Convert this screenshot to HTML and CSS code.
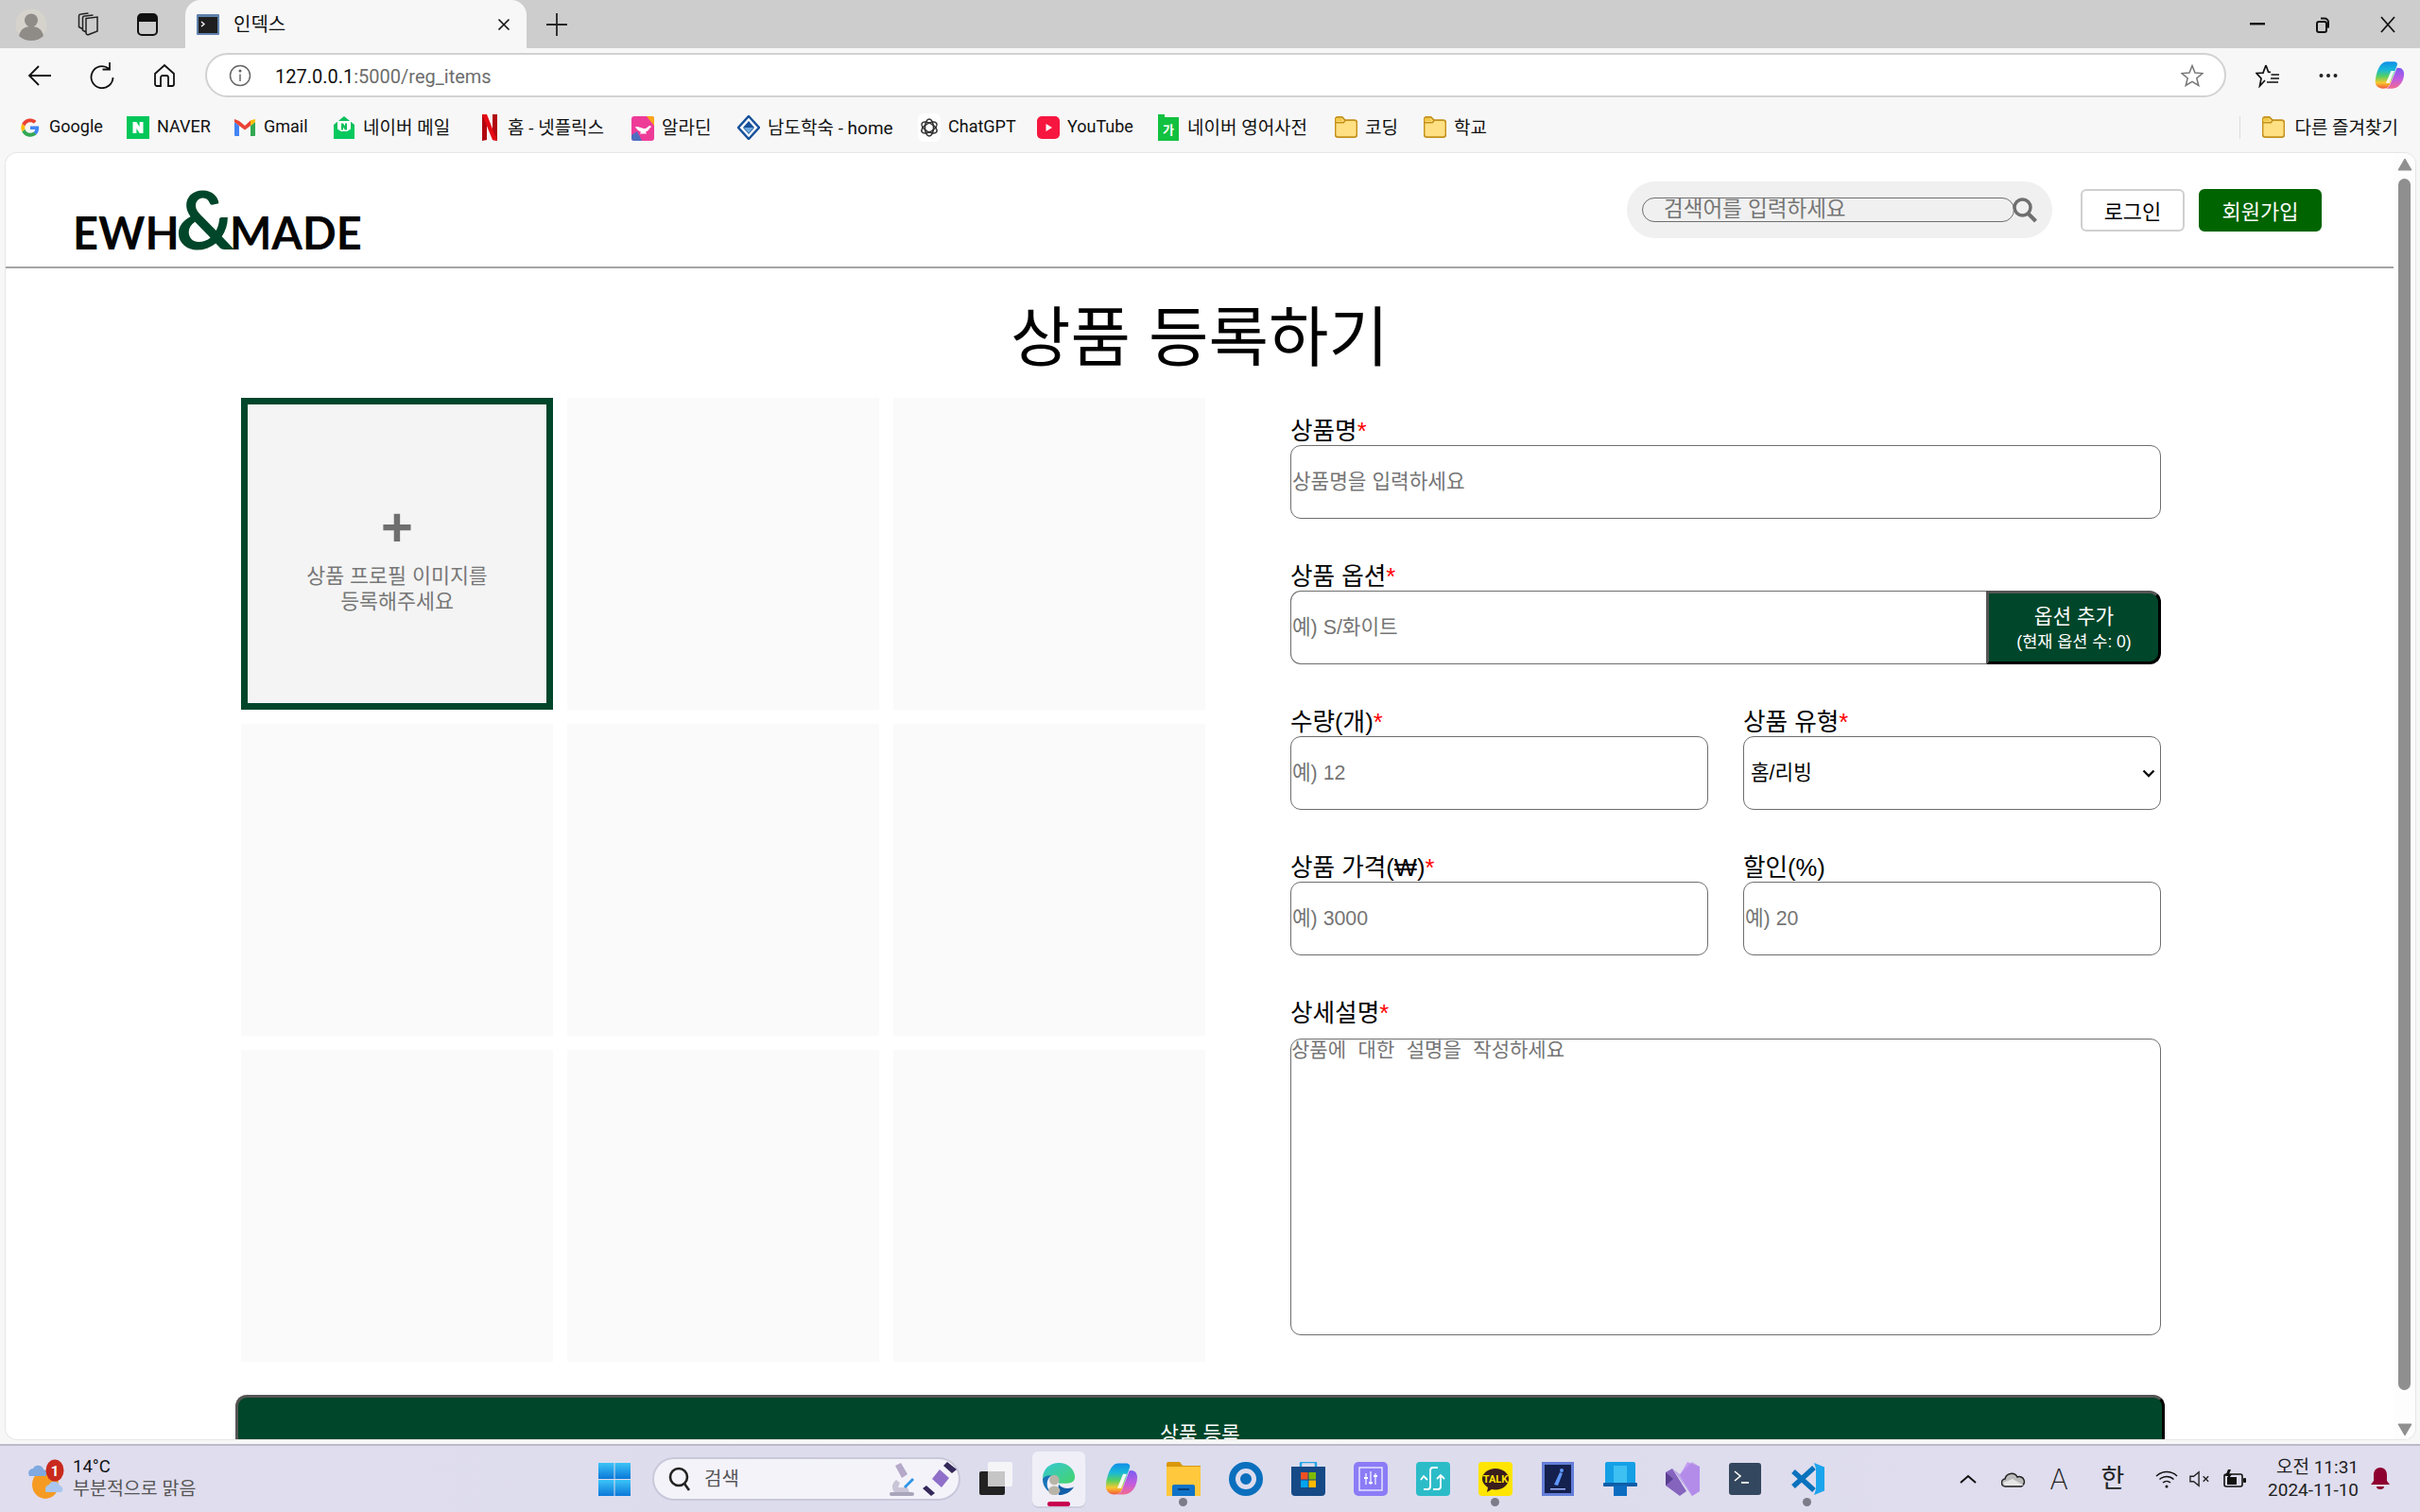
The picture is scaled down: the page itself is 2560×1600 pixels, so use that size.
FILE: index.html
```html
<!DOCTYPE html>
<html lang="ko">
<head>
<meta charset="utf-8">
<title>인덱스</title>
<link rel="stylesheet" href="styles.css">
</head>
<body>
<svg class="defs" width="0" height="0">
  <defs>
    <symbol id="folder" viewBox="1 2 22 21.500"><path d="M1.5 5a2.5 2.5 0 0 1 2.5-2.5h4l3 3h9a2.5 2.5 0 0 1 2.5 2.5v11.500a2.500 2.500 0 0 1-2.500 2.500h-16a2.500 2.500 0 0 1-2.500-2.500z" fill="#ffe083" stroke="#c4911c" stroke-width="1.600"/><path d="M1.500 8h8l2-2.500" fill="none" stroke="#c4911c" stroke-width="1.400"/><path d="M2 3.500h5l2 3h-7z" fill="#f2c744"/></symbol>
    <linearGradient id="cop" x1="0" y1="0" x2="0" y2="1"><stop offset="0" stop-color="#0f8fe8"/><stop offset=".3" stop-color="#19b8d8"/><stop offset=".55" stop-color="#58d060"/><stop offset=".78" stop-color="#f7c92f"/><stop offset="1" stop-color="#f4573a"/></linearGradient>
    <linearGradient id="cop2" x1="0" y1="0" x2="0" y2="1"><stop offset="0" stop-color="#7a5cf0"/><stop offset=".55" stop-color="#c25ce0"/><stop offset="1" stop-color="#f46a8e"/></linearGradient>
    <symbol id="copilot" viewBox="0 0 36 48"><path d="M15 2h8c3 0 5 2 4 6L19 38c-1 4-3 8-8 8-6 0-10-6-9-14C3 20 7 2 15 2z" fill="url(#cop)"/><path d="M28 12c5 0 7 4 7 10 0 12-6 24-14 24h-9c4 0 6-3 7-7l7-24c.5-2 1-3 2-3z" fill="url(#cop2)"/><path d="M20 17h4l-6 20h-4z" fill="#fff" opacity=".9"/></symbol>
    <linearGradient id="edge" x1="0" y1="0" x2="1" y2="1"><stop offset="0" stop-color="#36c7d6"/><stop offset="1" stop-color="#45d46a"/></linearGradient>
    <linearGradient id="win" x1="0" y1="0" x2="0" y2="1"><stop offset="0" stop-color="#3cc4f8"/><stop offset="1" stop-color="#0a78d8"/></linearGradient>
  </defs>
</svg>

<div class="window">
  <div class="tabstrip">
    <div class="strip-slot profile-slot"><svg width="34" height="34" viewBox="0 0 34 34"><circle cx="17" cy="17" r="16.500" fill="#d6d3cd"/><circle cx="17" cy="12.500" r="7" fill="#8f8b86"/><path d="M4 29c2-8 7-10 13-10s11 2 13 10c-3 3-8 5-13 5s-10-2-13-5z" fill="#8f8b86"/></svg></div>
    <div class="strip-slot work-slot"><svg width="26" height="26" viewBox="0 0 26 26" fill="none" stroke="#222" stroke-width="1.500"><path d="M11 6.500l12-1.500v15l-9 3.500a2 2 0 0 1-3-2z"/><path d="M11 21L7.500 19V6a2 2 0 0 1 2-2l9-1M7 17.500L3.500 15.500V4a2 2 0 0 1 2-2l8-1"/></svg></div>
    <div class="strip-slot actions-slot"><svg width="24" height="26" viewBox="0 0 24 26"><rect x="2" y="2" width="20" height="22" rx="4" fill="none" stroke="#111" stroke-width="2"/><path d="M2 6a4 4 0 0 1 4-4h12a4 4 0 0 1 4 4v4H2z" fill="#111"/></svg></div>
    <div class="tab">
      <svg width="24" height="22" viewBox="0 0 24 22"><rect width="24" height="22" rx="1" fill="#5f80ad"/><rect x="2" y="3" width="20" height="17" fill="#1f1f1f"/><path d="M5 8l3 2.500-3 2.500" stroke="#fff" stroke-width="1.300" fill="none"/></svg>
      <span class="tab-title">인덱스</span>
      <svg class="tab-close" width="14" height="14" viewBox="0 0 14 14" stroke="#111" stroke-width="1.600"><path d="M1.500 1.500l11 11M12.500 1.500l-11 11"/></svg>
    </div>
    <div class="strip-slot plus-slot"><svg width="22" height="26" viewBox="0 0 22 26" stroke="#222" stroke-width="1.800"><path d="M11 1v24M0 13h22"/></svg></div>
    <div class="winctl">
      <div class="winbtn"><svg width="16" height="4" viewBox="0 0 16 4"><rect width="16" height="2.400" fill="#111"/></svg></div>
      <div class="winbtn"><svg width="16" height="18" viewBox="0 0 16 18" fill="none" stroke="#111" stroke-width="2"><rect x="2" y="6" width="10" height="11" rx="2"/><path d="M6 2.500h4a4 4 0 0 1 4 4v6"/></svg></div>
      <div class="winbtn"><svg width="18" height="18" viewBox="0 0 18 18" stroke="#111" stroke-width="1.800"><path d="M2 1l14 16M16 1L2 17"/></svg></div>
    </div>
  </div>

  <div class="toolbar">
    <div class="tool-slot"><svg width="26" height="26" viewBox="0 0 26 26" fill="none" stroke="#111" stroke-width="1.800"><path d="M25 13H2M12 3L2 13l10 10"/></svg></div>
    <div class="tool-slot"><svg width="26" height="28" viewBox="0 0 26 28" fill="none" stroke="#111" stroke-width="1.800"><path d="M20 6.500A11.500 11.500 0 1 0 24.500 16M21 0v7.500h-7.500"/></svg></div>
    <div class="tool-slot"><svg width="24" height="26" viewBox="0 0 24 26" fill="none" stroke="#111" stroke-width="1.800"><path d="M2 11l10-9 10 9v11a2 2 0 0 1-2 2h-4v-9a2 2 0 0 0-2-2h-4a2 2 0 0 0-2 2v9H4a2 2 0 0 1-2-2z"/></svg></div>
    <div class="address">
      <svg width="24" height="24" viewBox="0 0 24 24" fill="none" stroke="#666" stroke-width="1.500"><circle cx="12" cy="12" r="10.500"/><path d="M12 10.500V18"/><circle cx="12" cy="7" r=".8" fill="#666"/></svg>
      <span class="url"><span class="url-host">127.0.0.1</span>:5000/reg_items</span>
      <svg class="addr-star" width="24" height="24" viewBox="0 0 24 24" fill="none" stroke="#777" stroke-width="1.500"><path d="M12 1.500l3 7.500 8 .6-6.200 5.100 2 7.800L12 18.300l-6.800 4.200 2-7.800L1 9.600 9 9z"/></svg>
    </div>
    <div class="tool-right">
      <div class="tool-slot-r"><svg width="26" height="26" viewBox="0 0 26 26" fill="none" stroke="#111" stroke-width="1.700"><path d="M11 2l2.600 7.200 2.400.1M10 18l-5.500 6 1.500-8-5-5.500 7-.4L11 2M16.500 12H25M16 16h9M12 20h12"/></svg></div>
      <div class="tool-slot-r"><svg width="20" height="6" viewBox="0 0 20 6" fill="#222"><circle cx="2.500" cy="3" r="2"/><circle cx="10" cy="3" r="2"/><circle cx="17.500" cy="3" r="2"/></svg></div>
      <div class="tool-slot-r"><svg width="33" height="31" viewBox="0 0 36 48" preserveAspectRatio="none"><use href="#copilot"/></svg></div>
    </div>
  </div>

  <div class="bookmarks">
    <div class="bm bm-latin bm-google"><svg width="22" height="22" viewBox="0 0 24 24"><path d="M22 12.300c0-.8-.1-1.400-.2-2H12v3.900h5.700c-.3 1.400-1 2.500-2.200 3.300l3.400 2.700c2-1.900 3.100-4.700 3.100-7.900z" fill="#4285f4"/><path d="M12 22.500c2.900 0 5.300-1 7-2.600l-3.400-2.600c-.9.600-2.100 1-3.600 1-2.800 0-5.200-1.900-6-4.500l-3.500 2.700c1.700 3.600 5.300 6 9.500 6z" fill="#34a853"/><path d="M6 13.700c-.4-1.200-.4-2.500 0-3.500L2.500 7.500c-1.400 2.800-1.400 6.100 0 8.900z" fill="#fbbc05"/><path d="M12 5.700c1.600 0 3 .6 4.100 1.600l3-3C17.300 2.600 14.900 1.500 12 1.500 7.800 1.500 4.200 3.900 2.500 7.500L6 10.200c.8-2.600 3.200-4.500 6-4.500z" fill="#ea4335"/></svg><span>Google</span></div>
    <div class="bm bm-latin bm-naver"><svg width="24" height="24" viewBox="0 0 24 24"><rect width="24" height="24" fill="#03c75a"/><path d="M6.500 6h3.800l3.300 5V6h3.900v12h-3.800l-3.300-5v5H6.500z" fill="#fff"/></svg><span>NAVER</span></div>
    <div class="bm bm-latin bm-gmail"><svg width="24" height="20" viewBox="0 0 24 20"><path d="M1 19V4l5 4v11H2a1 1 0 0 1-1-1z" fill="#4285f4"/><path d="M18 19V8l5-4v14a1 1 0 0 1-1 1z" fill="#34a853"/><path d="M18 2.500l5-1.500v3l-5 4-1-2z" fill="#fbbc05"/><path d="M1 4V1l5 2 6 5 6-5.500V8l-6 4.500L6 8z" fill="#ea4335"/></svg><span>Gmail</span></div>
    <div class="bm bm-nmail"><svg width="24" height="26" viewBox="0 0 24 26"><path d="M1 10L12 1l11 9v14a1 1 0 0 1-1 1H2a1 1 0 0 1-1-1z" fill="#0bbf5c"/><rect x="5" y="6" width="14" height="11" fill="#fff"/><path d="M9 8.500h2l2 3v-3h2v7h-2l-2-3v3H9z" fill="#0bbf5c"/><path d="M1 12l11 7 11-7v13H1z" fill="#06c95e"/></svg><span>네이버 메일</span></div>
    <div class="bm bm-netflix"><svg width="20" height="30" viewBox="3 0 18 30"><path d="M4 1h5v27l-5 1z" fill="#b1060f"/><path d="M15 1h5v28l-5-1z" fill="#b1060f"/><path d="M4 1h5l11 28-5-1z" fill="#e50914"/></svg><span>홈 - 넷플릭스</span></div>
    <div class="bm bm-aladin"><svg width="24" height="28" viewBox="0 0 24 28"><rect y="2" width="24" height="26" rx="3" fill="#ee3b98"/><path d="M16 2h6a2 2 0 0 1 2 2v8z" fill="#f9a61a"/><path d="M0 22l6-4 5 10H3a3 3 0 0 1-3-3z" fill="#4c6fc0"/><path d="M4 13c5 0 7 2 10 2 2 0 3-2 5-3 1 0 2 .5 2 1.500-2 0-2 4-6 5l1 2H9l1-2c-3-1-5-3-6-5.500z" fill="#fff"/></svg><span>알라딘</span></div>
    <div class="bm bm-namdo"><svg width="24" height="26" viewBox="0 0 24 26"><path d="M12 1l11 12-11 12L1 13z" fill="#fff" stroke="#17519b" stroke-width="2.500"/><path d="M12 6l6 7-6 7-6-7z" fill="#17519b"/><path d="M7 13h10l-5 6z" fill="#6fa9dd"/></svg><span>남도학숙 - home</span></div>
    <div class="bm bm-latin bm-chatgpt"><svg width="24" height="30" viewBox="0 0 24 30"><rect width="24" height="30" rx="6" fill="#fff"/><g fill="none" stroke="#333" stroke-width="1.500"><ellipse cx="12" cy="15" rx="4.500" ry="9"/><ellipse cx="12" cy="15" rx="4.500" ry="9" transform="rotate(60 12 15)"/><ellipse cx="12" cy="15" rx="4.500" ry="9" transform="rotate(120 12 15)"/></g></svg><span>ChatGPT</span></div>
    <div class="bm bm-latin bm-youtube"><svg width="24" height="24" viewBox="0 0 24 24"><rect width="24" height="24" rx="5" fill="#f7163f"/><path d="M9.500 8l6.500 4-6.500 4z" fill="#fff"/></svg><span>YouTube</span></div>
    <div class="bm bm-dict"><svg width="22" height="28" viewBox="0 0 22 28"><path d="M0 0h7v3h15v25H0z" fill="#12c13f"/><text x="11" y="21" class="dict-mark" text-anchor="middle">가</text></svg><span>네이버 영어사전</span></div>
    <div class="bm bm-code"><svg width="24" height="24"><use href="#folder"/></svg><span>코딩</span></div>
    <div class="bm bm-school"><svg width="24" height="24"><use href="#folder"/></svg><span>학교</span></div>
    <div class="bm-other">
      <svg width="24" height="24"><use href="#folder"/></svg><span>다른 즐겨찾기</span>
    </div>
  </div>

  <div class="frame">
    <div class="viewport">
      <div class="page">
        <header class="site-header">
          <div class="logo"><span>EWH</span><span class="logo-amp">&amp;</span><span>MADE</span></div>
          <div class="header-right">
            <div class="search">
              <input class="search-input" type="text" placeholder="검색어를 입력하세요">
              <svg class="search-icon" width="28" height="28" viewBox="0 0 28 28" fill="none" stroke="#6f6f6f"><circle cx="11.500" cy="11.500" r="8.500" stroke-width="3.500"/><path d="M17.500 18l8 8" stroke-width="4"/></svg>
            </div>
            <button class="btn-login" type="button">로그인</button>
            <button class="btn-signup" type="button">회원가입</button>
          </div>
        </header>
        <h1 class="page-title">상품 등록하기</h1>
        <form class="reg">
          <div class="reg-top">
            <div class="photos">
              <div class="photo photo-main">
                <span class="photo-plus">+</span>
                <span class="photo-text">상품 프로필 이미지를<br>등록해주세요</span>
              </div>
              <div class="photo"></div><div class="photo"></div>
              <div class="photo"></div><div class="photo"></div><div class="photo"></div>
              <div class="photo"></div><div class="photo"></div><div class="photo"></div>
            </div>
            <div class="fields">
              <div class="field">
                <label class="lbl">상품명<span class="req">*</span></label>
                <input class="inp" type="text" placeholder="상품명을 입력하세요">
              </div>
              <div class="field">
                <label class="lbl">상품 옵션<span class="req">*</span></label>
                <div class="option-row">
                  <input class="inp inp-option" type="text" placeholder="예) S/화이트">
                  <button class="btn-option" type="button"><span class="opt-main">옵션 추가</span><span class="opt-sub">(현재 옵션 수: 0)</span></button>
                </div>
              </div>
              <div class="field-row">
                <div class="field">
                  <label class="lbl">수량(개)<span class="req">*</span></label>
                  <input class="inp" type="text" placeholder="예) 12">
                </div>
                <div class="field">
                  <label class="lbl">상품 유형<span class="req">*</span></label>
                  <div class="sel-wrap">
                    <select class="inp sel"><option>홈/리빙</option></select>
                    <svg class="sel-arrow" width="14" height="9" viewBox="0 0 14 9" fill="none" stroke="#111" stroke-width="2.400"><path d="M1.500 1.500L7 7l5.500-5.500"/></svg>
                  </div>
                </div>
              </div>
              <div class="field-row">
                <div class="field">
                  <label class="lbl">상품 가격(₩)<span class="req">*</span></label>
                  <input class="inp" type="text" placeholder="예) 3000">
                </div>
                <div class="field">
                  <label class="lbl">할인(%)</label>
                  <input class="inp" type="text" placeholder="예) 20">
                </div>
              </div>
              <div class="field field-desc">
                <label class="lbl lbl-desc">상세설명<span class="req">*</span></label>
                <textarea class="desc" placeholder="상품에 대한 설명을 작성하세요"></textarea>
              </div>
            </div>
          </div>
          <button class="btn-submit" type="button">상품 등록</button>
        </form>
      </div>
      <div class="scrollbar">
        <svg width="16" height="14" viewBox="0 0 16 14"><path d="M8 1l7 12H1z" fill="#8f8f8f" stroke="#8f8f8f" stroke-linejoin="round"/></svg>
        <div class="thumb"></div>
        <svg width="16" height="14" viewBox="0 0 16 14"><path d="M8 13L1 1h14z" fill="#8f8f8f" stroke="#8f8f8f" stroke-linejoin="round"/></svg>
      </div>
    </div>
  </div>

  <div class="taskbar">
    <div class="tb-weather">
      <svg width="40" height="42" viewBox="0 0 40 42"><ellipse cx="19" cy="27" rx="14" ry="15" fill="#f59b23"/><path d="M2 18a5 5 0 0 1 4-8 6 6 0 0 1 11 1 4 4 0 0 1 2 7z" fill="#7fa9e0"/><path d="M20 35a5 5 0 0 1 3-8 6 6 0 0 1 11 1 4 4 0 0 1 2 7z" fill="#a8c6ef"/><ellipse cx="29" cy="12" rx="9.500" ry="11.500" fill="#c92a1e"/><text x="29" y="18" class="badge-num" text-anchor="middle">1</text></svg>
      <div class="w-text"><span class="w-temp">14°C</span><span class="w-desc">부분적으로 맑음</span></div>
    </div>
    <div class="tb-start"><svg width="34" height="35" viewBox="0 0 34 35"><rect width="16.500" height="17" fill="url(#win)"/><rect x="17.500" width="16.500" height="17" fill="url(#win)"/><rect y="18" width="16.500" height="17" fill="url(#win)"/><rect x="17.500" y="18" width="16.500" height="17" fill="url(#win)"/></svg></div>
    <div class="tb-search">
      <svg width="26" height="28" viewBox="0 0 26 28" fill="none" stroke="#222" stroke-width="2.600"><circle cx="12" cy="12" r="9"/><path d="M18 19l5 7"/></svg>
      <span class="tb-search-text">검색</span>
      <svg class="tb-search-art" width="76" height="38" viewBox="0 0 76 38"><path d="M8 33c-3-4-3-9 2-13l4 3-2 5h10l2 5z" fill="#c9c5d6"/><path d="M9 5l6-3 7 12-6 4z" fill="#b4a9c8"/><path d="M18 27l9-9 2 2-9 9z" fill="#2e95e6"/><rect x="3" y="33" width="26" height="4" rx="2" fill="#a9a5bb"/><path d="M48 19l8-10 10 9-8 10z" fill="#8f6fc9"/><path d="M42 26l9 8-4 3-9-8z M60 5l9 8 5-4-10-8z" fill="#35285a"/></svg>
    </div>
    <div class="tb-apps">
      <div class="app"><svg width="38" height="36" viewBox="0 0 38 36"><rect x="10" y="0" width="26" height="26" rx="2" fill="#f5f5f8"/><rect x="1" y="10" width="27" height="25" rx="2" fill="#222"/><rect x="10" y="10" width="18" height="16" fill="#c6c6c6"/></svg></div>
      <div class="app app-active"><svg width="38" height="38" viewBox="0 0 38 38"><path d="M1 19C1 8 9 1 19 1c11 0 18 8 18 16 0 5-4 7-9 7h-9c1-5-2-8-7-8-5 0-9 1-11 3z" fill="url(#edge)"/><path d="M1 19c2-3 5-4 10-4-4 3-5 6-5 10 0 6 5 11 13 12C9 37 1 29 1 19z" fill="#1a72b8"/><path d="M19 37c7 0 13-3 17-9-4 2-13 3-17-3-1 5-1 9 0 12z" fill="#125ea8"/><circle cx="14" cy="20" r="5.500" fill="#b9b4a8"/><ellipse cx="14" cy="32" rx="6.500" ry="5" fill="#b9b4a8"/></svg><span class="app-bar"></span></div>
      <div class="app"><svg class="app-copilot" width="36" height="36" viewBox="0 0 36 48" preserveAspectRatio="none"><use href="#copilot"/></svg></div>
      <div class="app app-open"><svg width="36" height="36" viewBox="0 0 36 36"><path d="M0 2a2 2 0 0 1 2-2h12l3 4h19v32H0z" fill="#d9970c"/><rect y="5" width="36" height="31" fill="#ffc83d"/><path d="M6 26a2 2 0 0 1 2-2h20a2 2 0 0 1 2 2v10H6z" fill="#0f73c8"/><rect x="12" y="28" width="12" height="2" fill="#063f78"/></svg><span class="app-dot"></span></div>
      <div class="app"><svg width="36" height="36" viewBox="0 0 36 36" fill="none" stroke="#0a6fbd"><circle cx="18" cy="18" r="14.500" stroke-width="7"/><circle cx="18" cy="18" r="3" stroke-width="6"/></svg></div>
      <div class="app"><svg width="36" height="36" viewBox="0 0 36 36"><path d="M0 5h36v27a4 4 0 0 1-4 4H4a4 4 0 0 1-4-4z" fill="#164a86"/><path d="M10 5V2a2 2 0 0 1 2-2h12a2 2 0 0 1 2 2v3" fill="none" stroke="#27a4e6" stroke-width="2.500"/><rect x="10" y="11" width="7.500" height="7.500" fill="#f25022"/><rect x="18.500" y="11" width="7.500" height="7.500" fill="#7fba00"/><rect x="10" y="19.500" width="7.500" height="7.500" fill="#00a4ef"/><rect x="18.500" y="19.500" width="7.500" height="7.500" fill="#ffb900"/></svg></div>
      <div class="app"><svg width="36" height="36" viewBox="0 0 36 36"><rect width="36" height="36" rx="5" fill="#8b7cf6"/><rect x="6" y="6" width="24" height="24" fill="none" stroke="#e6e2ff" stroke-width="1.500"/><path d="M13 12v12M18 10v14M23 12v12" stroke="#f3f0ff" stroke-width="1.300"/><rect x="11" y="16" width="4" height="2" fill="#fff"/><rect x="16" y="21" width="4" height="2" fill="#fff"/><rect x="21" y="14" width="4" height="2" fill="#fff"/></svg></div>
      <div class="app"><svg width="36" height="36" viewBox="0 0 36 36"><rect width="36" height="36" rx="4" fill="#2cbcc8"/><path d="M23 6h-5a3 3 0 0 0-3 3v17a3 3 0 0 1-3 3H8M5 19l3-4 4 4M18 29h5a3 3 0 0 0 3-3V15M22 18l4-4 4 4" fill="none" stroke="#fff" stroke-width="1.800"/></svg></div>
      <div class="app app-open"><svg width="36" height="36" viewBox="0 0 36 36"><rect width="36" height="36" rx="4" fill="#ffe500"/><path d="M18 7c-8 0-14 5-14 11 0 4 3 7 6 9l-1 5 5-3c10 2 18-4 18-11 0-6-6-11-14-11z" fill="#3a1d1d"/><text x="18" y="22" class="talk-mark" text-anchor="middle">TALK</text></svg><span class="app-dot"></span></div>
      <div class="app"><svg width="34" height="36" viewBox="0 0 34 36"><rect width="34" height="36" fill="#3a5ed0" opacity=".75"/><rect x="3" y="3" width="28" height="30" fill="#14204e"/><path d="M13 24l6-13 3 1-5 13z" fill="#5f97ff"/><circle cx="21" cy="9" r="2" fill="#5f97ff"/><rect x="9" y="28" width="16" height="1.500" fill="#9fb4ff"/></svg></div>
      <div class="app"><svg width="36" height="36" viewBox="0 0 36 36"><rect x="2" y="0" width="32" height="25" rx="2" fill="#15a0e6"/><rect x="11" y="4" width="14" height="21" fill="#3ec0f2"/><rect x="0" y="22" width="36" height="4" rx="1" fill="#0c5ea8"/><rect x="11" y="25" width="14" height="11" fill="#0b6cc0"/></svg></div>
      <div class="app"><svg width="36" height="36" viewBox="0 0 36 36"><path d="M0 11l7-4 15 24-7 5-15-11z" fill="#7b57b8" opacity=".9"/><path d="M36 5v26l-8 5-13-22 8-14z" fill="#c39bf2"/><path d="M0 11v14l8-7z" fill="#5a3e91"/><path d="M7 7l21 29 8-5V5l-8-5-13 13z" fill="#a57fe3" opacity=".55"/></svg></div>
      <div class="app"><svg width="34" height="34" viewBox="0 0 34 34"><rect width="34" height="34" rx="3" fill="#33475e"/><path d="M6 9l6 5-6 5" fill="none" stroke="#fff" stroke-width="1.600"/><rect x="13" y="20" width="8" height="1.800" fill="#fff"/></svg></div>
      <div class="app app-open"><svg width="36" height="36" viewBox="0 0 36 36"><path d="M3 10l22 20M3 26L25 6" fill="none" stroke="#0a72bc" stroke-width="5.500"/><path d="M25 1l11 4.500v25L25 35l2-6V7z" fill="#1ca4ec"/></svg><span class="app-dot"></span></div>
    </div>
    <div class="tray">
      <div class="tray-i tray-w48"><svg width="18" height="10" viewBox="0 0 18 10" fill="none" stroke="#111" stroke-width="2"><path d="M1 9l8-7 8 7"/></svg></div>
      <div class="tray-i tray-w48"><svg width="26" height="18" viewBox="0 0 26 18"><path d="M5 17a4 4 0 0 1-1-8 7 7 0 0 1 13-2 5 5 0 0 1 4 10z" fill="#bbb" stroke="#222" stroke-width="1.500"/><path d="M2 13l10-4 12 7H4z" fill="#e6e6e6"/></svg></div>
      <div class="tray-i tray-w48 tray-a">A</div>
      <div class="tray-i tray-w66 tray-han">한</div>
      <div class="tray-i tray-w48"><svg width="24" height="20" viewBox="0 0 24 20" fill="none" stroke="#111" stroke-width="1.500"><path d="M1 7a16 16 0 0 1 22 0M4.500 10.500a11 11 0 0 1 15 0M8 14a6 6 0 0 1 8 0"/><circle cx="12" cy="18" r="1.500" fill="#111" stroke="none"/></svg></div>
      <div class="tray-i tray-w22"><svg width="24" height="20" viewBox="0 0 24 20" fill="none" stroke="#222" stroke-width="1.500"><path d="M1 7h4l6-5v16l-6-5H1z"/><path d="M16 7l6 6M22 7l-6 6"/></svg></div>
      <div class="tray-i tray-w52"><svg width="24" height="20" viewBox="0 0 24 20"><rect x="1" y="5" width="19" height="13" rx="2" fill="none" stroke="#111" stroke-width="1.600"/><rect x="4" y="8" width="10" height="8" fill="#111"/><rect x="21" y="9" width="3" height="5" rx="1" fill="#111"/><path d="M5 0L2 7h3l-1 5 5-7H6l2-5z" fill="#111"/></svg></div>
      <div class="clock"><span>오전 11:31</span><span>2024-11-10</span></div>
      <div class="tray-i tray-bell"><svg width="20" height="24" viewBox="0 0 20 24" fill="#8e0030"><path d="M10 0c5 0 7 4 7 8v6l3 4H0l3-4V8c0-4 2-8 7-8z"/><path d="M6 20h8a4 3 0 0 1-8 0z"/></svg></div>
    </div>
  </div>
</div>
</body>
</html>
```
FILE: styles.css
```css
* { box-sizing: border-box; }
html, body { margin: 0; padding: 0; }
body { width: 2560px; height: 1600px; overflow: hidden; background: #f7f7f7; font-family: Roboto, "Noto Sans CJK KR", sans-serif; color: #111; }
.defs { position: absolute; }
.window { width: 2560px; height: 1600px; display: flex; flex-direction: column; overflow: hidden; }

.tabstrip { height: 51px; background: #cdcdcd; display: flex; align-items: stretch; flex: none; }
.strip-slot { display: flex; align-items: center; justify-content: center; }
.profile-slot { width: 66px; }
.work-slot { width: 54px; }
.actions-slot { width: 72px; margin-right: 4px; }
.plus-slot { width: 64px; }
.tab { width: 361px; background: #f7f7f7; border-radius: 16px 16px 0 0; display: flex; align-items: center; padding: 0 17px 0 12px; gap: 15px; }
.tab-title { font-size: 20px; flex: 1; padding-bottom: 3px; }
.winctl { margin-left: auto; display: flex; }
.winbtn { width: 68.67px; display: flex; align-items: center; justify-content: center; }

.toolbar { height: 57px; flex: none; display: flex; align-items: center; padding: 0 1px 0 9px; background: #f7f7f7; }
.tool-slot { width: 66px; display: flex; justify-content: center; align-items: center; }
.address { flex: 1; margin-left: 10px; height: 47px; background: #fff; border: 2px solid #d2d2d2; border-radius: 24px; display: flex; align-items: center; padding: 0 22px 0 23px; gap: 25px; }
.url { font-size: 20px; color: #6d6d6d; flex: 1; padding-top: 2px; }
.url-host { color: #111; }
.tool-right { display: flex; margin-left: 12px; }
.tool-slot-r { width: 64px; display: flex; justify-content: center; align-items: center; }

.bookmarks { height: 54px; flex: none; display: flex; align-items: center; padding-left: 20px; font-size: 19px; background: #f7f7f7; }
.bm { display: flex; align-items: center; gap: 8px; flex: none; white-space: nowrap; }
.bm span { padding-bottom: 4px; }
.bm svg { width: 24px; flex: none; }
.bm-latin { font-size: 18px; }
.bm-google { width: 114px; } .bm-naver { width: 113px; } .bm-gmail { width: 105px; }
.bm-nmail { width: 156px; } .bm-netflix { width: 160px; gap: 9px; } .bm-aladin { width: 112px; }
.bm-netflix svg { width: 20px; }
.bm-namdo { width: 191px; } .bm-chatgpt { width: 126px; } .bm-youtube { width: 127px; }
.bm-dict { width: 188px; } .bm-code { width: 94px; } .bm-school { width: 90px; }
.bm-other { margin-left: auto; margin-right: 23px; padding-left: 23px; height: 24px; border-left: 1px solid #dcdcdc; display: flex; align-items: center; gap: 10px; white-space: nowrap; }
.bm-other span { padding-bottom: 4px; }
.dict-mark { font-size: 13px; font-weight: 700; fill: #fff; font-family: "Noto Sans CJK KR", sans-serif; }

.frame { height: 1366px; flex: none; padding: 0 5px 5px 6px; background: #f7f7f7; }
.viewport { height: 100%; background: #fff; border-radius: 12px; display: flex; overflow: hidden; box-shadow: 0 0 0 1px #e6e6e6; }
.page { width: 2526px; flex: none; overflow: hidden; font-family: "Liberation Sans", "Noto Sans CJK KR", sans-serif; color: #000; }
.scrollbar { flex: 1; display: flex; flex-direction: column; align-items: center; padding: 5px 0 3px; background: #fdfdfd; gap: 3px; }
.thumb { flex: 1; width: 13px; margin-top: 5px; margin-bottom: 32px; background: #8f8f8f; border-radius: 7px; }

.site-header { height: 122px; border-bottom: 2px solid #a4a4a4; display: flex; justify-content: space-between; align-items: center; padding: 0 76px 0 71px; }
.logo { align-self: flex-end; display: flex; align-items: baseline; font-family: Lato, sans-serif; font-weight: 700; font-size: 47px; line-height: 60px; padding-bottom: 6px; color: #050505; }
.logo-amp { font-size: 86px; line-height: 60px; color: #00462a; margin: 0 -5px 0 -4px; }
.header-right { display: flex; align-items: center; }
.search { width: 450px; height: 60px; border-radius: 30px; background: #f0f0f0; display: flex; align-items: center; padding-left: 16px; }
.search-input { width: 394px; height: 26px; border: 1px solid #6e6e6e; border-radius: 13px; background: transparent; padding: 0 0 0 22px; font: 400 22.500px "Liberation Sans", "Noto Sans CJK KR", sans-serif; }
.search-input::placeholder { color: #757575; }
.search-icon { margin-left: -3px; }
.btn-login, .btn-signup { height: 45px; border-radius: 6px; font: 400 22px "Liberation Sans", "Noto Sans CJK KR", sans-serif; padding: 0; cursor: pointer; }
.btn-login { width: 110px; margin-left: 30px; background: #fff; border: 2px solid #cfcfcf; color: #000; }
.btn-signup { width: 130px; margin-left: 15px; background: #006400; border: 2px solid #006400; color: #fff; }

.page-title { height: 137px; margin: 0; text-align: center; font-size: 69px; font-weight: 400; line-height: 150px; }
.reg { width: 2041px; margin-left: 243px; padding: 0 4px 0 6px; }
.reg-top { display: flex; justify-content: space-between; height: 1020px; }
.photos { width: 1020px; display: grid; grid-template-columns: repeat(3, 330px); grid-auto-rows: 330px; gap: 15px; }
.photo { background: #fafafa; }
.photo-main { background: #f4f4f4; border: 7px solid #00462a; display: flex; flex-direction: column; align-items: center; justify-content: center; gap: 14px; padding-top: 12px; color: #777; text-align: center; }
.photo-plus { font-size: 58px; font-weight: 700; line-height: 48px; color: #6f6f6f; }
.photo-text { font-size: 21.700px; line-height: 27px; }
.fields { width: 921px; padding-top: 20px; }
.field { margin-bottom: 46px; }
.lbl { display: block; height: 30px; font-size: 25.600px; line-height: 30px; }
.req { color: #f00; }
.inp { display: block; width: 100%; height: 78px; border: 1px solid #6e6e6e; border-radius: 11px; padding: 0 1px; background: #fff; font: 400 21.330px "Liberation Sans", "Noto Sans CJK KR", sans-serif; color: #000; }
.inp::placeholder { color: #757575; }
.option-row { display: flex; }
.inp-option { flex: 1; width: auto; border-radius: 11px 0 0 11px; border-right: 0; }
.btn-option { width: 185px; height: 78px; flex: none; border: 3px solid; border-color: #555 #000 #000 #555; border-radius: 0 12px 12px 0; background: #00462a; color: #fff; display: flex; flex-direction: column; align-items: center; justify-content: center; padding: 1px 0 0 1px; font-family: "Liberation Sans", "Noto Sans CJK KR", sans-serif; }
.opt-main { font-size: 21.330px; line-height: 28px; }
.opt-sub { font-size: 17.500px; line-height: 24px; }
.field-row { display: grid; grid-template-columns: 442px 442px; gap: 37px; }
.sel-wrap { position: relative; }
.sel { appearance: none; padding: 0 7px; }
.sel-arrow { position: absolute; right: 6px; top: 35px; }
.lbl-desc { height: 42px; }
.field-desc { margin-bottom: 0; }
.desc { display: block; width: 100%; height: 314px; border: 1px solid #6e6e6e; border-radius: 11px; padding: 0; resize: none; font: 400 21px/26px "Liberation Mono", "Noto Sans CJK KR", monospace; background: #fff; }
.desc::placeholder { color: #757575; }
.btn-submit { display: block; width: 2041px; height: 78px; margin: 35px 0 0 -6px; border: 3px solid; border-color: #555 #000 #000 #555; border-radius: 12px; background: #00462a; color: #fff; font: 400 21.330px "Liberation Sans", "Noto Sans CJK KR", sans-serif; padding: 0; }

.taskbar { height: 72px; flex: none; background: linear-gradient(90deg, #e0ddee, #dcdced 45%, #e0ddee); border-top: 2px solid #bdbac8; display: flex; align-items: center; }
.tb-weather { width: 633px; flex: none; padding-left: 29px; display: flex; align-items: center; gap: 8px; }
.w-text { display: flex; flex-direction: column; line-height: 23px; padding-bottom: 3px; }
.w-temp { color: #111; font-size: 18.500px; }
.w-desc { color: #555; font-size: 19.500px; }
.badge-num { font-size: 15px; font-weight: 700; fill: #fff; font-family: Roboto, sans-serif; }
.tb-start { width: 57px; flex: none; display: flex; }
.tb-search { width: 326px; height: 46px; margin-right: 5px; flex: none; background: #f4f3fa; border: 2px solid #c9c8da; border-radius: 23px; display: flex; align-items: center; padding-left: 14px; gap: 13px; }
.tb-search-text { font-size: 20px; color: #555; flex: 1; padding-bottom: 3px; }
.tb-apps { display: flex; flex: none; height: 100%; }
.app { width: 66px; height: 100%; position: relative; display: flex; align-items: center; justify-content: center; }
.app svg { max-height: 36px; }
.app-active::before { content: ""; position: absolute; left: 5px; right: 5px; top: 6px; height: 58px; border-radius: 6px; background: #f0eff8; box-shadow: 0 2px 0 #cfcedd; }
.app-active svg { position: relative; }
.app-bar { position: absolute; left: 21px; bottom: 6px; width: 24px; height: 5px; border-radius: 3px; background: #c8004f; }
.app-dot { position: absolute; left: 28px; bottom: 6px; width: 9px; height: 9px; border-radius: 50%; background: #7c7c88; }
.tray { margin-left: auto; padding-right: 19px; display: flex; align-items: center; }
.tray-i { display: flex; align-items: center; justify-content: center; }
.tray-w48 { width: 48px; } .tray-w66 { width: 66px; } .tray-w22 { width: 22px; } .tray-w52 { width: 52px; }
.tray-a { font-family: Inter, sans-serif; font-size: 30px; font-weight: 200; color: #222; line-height: 1; }
.tray-han { font-size: 27px; color: #222; line-height: 1; }
.clock { width: 93px; margin-left: 12px; display: flex; flex-direction: column; align-items: flex-end; font-size: 19px; line-height: 24px; white-space: nowrap; color: #222; }
.tray-bell { width: 46px; }
.talk-mark { font-size: 11px; font-weight: 700; fill: #ffe500; font-family: Roboto, sans-serif; }
```
